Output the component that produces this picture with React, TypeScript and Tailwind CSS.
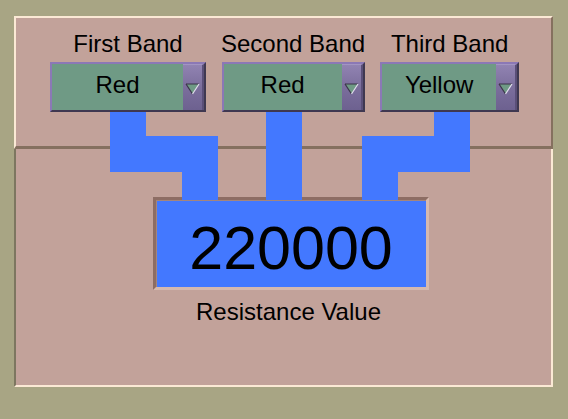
// Resistor colour-band calculator panel

const BANDS = [
  { label: "First Band", value: "Red", width: "w-[156px]" },
  { label: "Second Band", value: "Red", width: "w-[143px]" },
  { label: "Third Band", value: "Yellow", width: "w-[139px]" },
];

function Arrow() {
  return (
    <svg width="15" height="12" viewBox="0 0 15 12">
      <polygon points="1,1 14,1 7.5,11" fill="#6f9a85" />
      <line x1="1" y1="1" x2="14" y2="1" stroke="#3a3348" strokeWidth="1" />
      <line x1="1" y1="1" x2="7.5" y2="11" stroke="#3a3348" strokeWidth="1.2" />
      <line x1="14" y1="1" x2="7.5" y2="11" stroke="#e4def0" strokeWidth="1.2" />
    </svg>
  );
}

function Dropdown({ value, width }: { value: string; width: string }) {
  return (
    <div
      className={`${width} h-[50px] flex border-2 border-t-[#8b78b6] border-l-[#8b78b6] border-b-[#3f3851] border-r-[#3f3851]`}
    >
      <div className="flex-1 bg-[#6f9a85] flex items-center justify-center pb-[4px] text-[24px] leading-[28px] text-black">
        {value}
      </div>
      <div className="w-[21px] flex items-center justify-center pt-[2px] bg-linear-to-b from-[#9183b2] via-[#7b6e9c] to-[#6d6190] border-t border-t-[#a295c2] border-r-2 border-r-[#5a4f78]">
        <Arrow />
      </div>
    </div>
  );
}

function Wires() {
  return (
    <svg
      className="absolute inset-0 pointer-events-none"
      width="568"
      height="419"
      viewBox="0 0 568 419"
    >
      <g fill="#4378ff">
        <polygon points="110,112 146,112 146,136 218,136 218,200 182,200 182,172 110,172" />
        <rect x="266" y="112" width="36" height="88" />
        <polygon points="434,112 470,112 470,172 398,172 398,200 362,200 362,136 434,136" />
      </g>
    </svg>
  );
}

export default function App() {
  return (
    <div
      className="relative w-[568px] h-[419px] bg-[#a8a584] pt-[16px] pl-[14px] text-black"
      style={{ fontFamily: '"Liberation Sans", Arial, sans-serif' }}
    >
      <div className="w-[539px]">
        {/* top panel: raised */}
        <div className="h-[133px] bg-[#c2a29a] border-t-2 border-l-2 border-r-2 border-b-[3px] border-t-[#fbe9d5] border-l-[#fbe9d5] border-r-[#85705f] border-b-[#85705f] pt-[12px] pl-[34px] flex gap-[15px]">
          {BANDS.map((b) => (
            <div key={b.label} className="flex flex-col items-center gap-[4px]">
              <div className="text-[24px] leading-[28px] whitespace-nowrap">{b.label}</div>
              <Dropdown value={b.value} width={b.width} />
            </div>
          ))}
        </div>

        {/* lower panel: sunken */}
        <div className="h-[238px] bg-[#c2a29a] border-l-2 border-r-2 border-b-2 border-l-[#7d7660] border-r-[#fbe9d5] border-b-[#fbe9d5] pt-[48px] pl-[137px]">
          <div className="w-[276px] flex flex-col items-center">
            <div className="w-[276px] h-[93px] bg-[#4378ff] border-[3px] border-t-[#8d6d64] border-l-[#8d6d64] border-b-[#d6b9af] border-r-[#d6b9af] shadow-[inset_1px_1px_0_#a5857b] flex items-center justify-center pt-[8px]">
              <span className="text-[61px] leading-[70px]">220000</span>
            </div>
            <div className="mt-[8px] text-[24px] leading-[28px] pr-[5px]">Resistance Value</div>
          </div>
        </div>
      </div>
      <Wires />
    </div>
  );
}
